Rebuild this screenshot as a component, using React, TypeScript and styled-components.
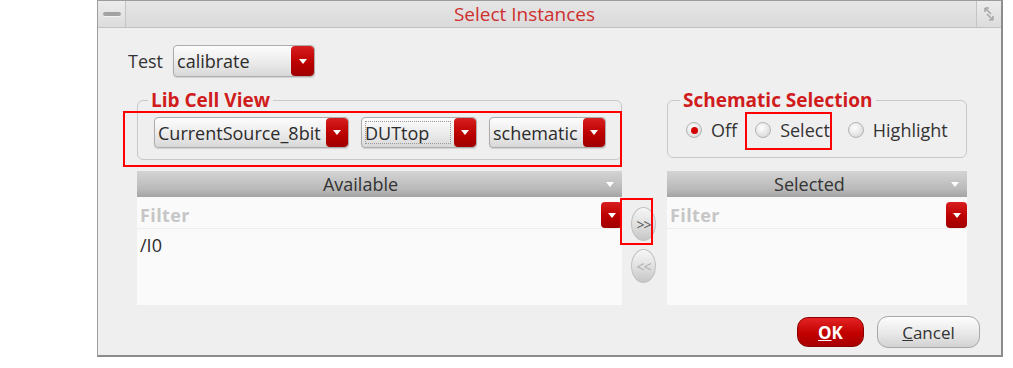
import React from 'react';
import styled, { createGlobalStyle } from 'styled-components';

const GlobalStyle = createGlobalStyle`
  html, body {
    margin: 0;
    padding: 0;
    background: #ffffff;
  }
  body {
    font-family: "Open Sans", "DejaVu Sans", Arial, sans-serif;
    font-size: 18px;
    color: #333333;
  }
`;

const Page = styled.div`
  width: 1013px;
  height: 368px;
  padding-left: 97px;
  box-sizing: border-box;
`;

const Window = styled.div`
  width: 906px;
  height: 357px;
  box-sizing: border-box;
  border: 1px solid #9c9c9c;
  border-right: 2px solid #8c8c8c;
  border-bottom: 2px solid #8c8c8c;
  background: #efefef;
  display: flex;
  flex-direction: column;
`;

const TitleBar = styled.div`
  height: 26px;
  display: flex;
  align-items: stretch;
  background: linear-gradient(#e6e6e6, #dadada);
  border-bottom: 1px solid #c2c2c2;
`;

const TitleButton = styled.div<{ $side: 'left' | 'right' }>`
  width: ${p => (p.$side === 'left' ? '27px' : '24px')};
  display: flex;
  align-items: center;
  justify-content: center;
  border-${p => (p.$side === 'left' ? 'right' : 'left')}: 1px solid #c4c4c4;
  background: linear-gradient(#ececec, #dcdcdc);
`;

const MinusBar = styled.div`
  width: 18px;
  height: 4px;
  border-radius: 2px;
  background: #a2a2a2;
  box-shadow: 0 1px 0 #f4f4f4;
`;

const Title = styled.div`
  flex: 1;
  text-align: center;
  padding-right: 53px;
  color: #cf2f2f;
  font-size: 19px;
  line-height: 26px;
`;

const Body = styled.div`
  flex: 1;
  display: flex;
  flex-direction: column;
  padding: 17px 20px 0 39px;
`;

const TestRow = styled.div`
  display: flex;
  align-items: center;
  gap: 10px;
  margin-left: -9px;
`;

const Label = styled.span`
  color: #333;
`;

const Combo = styled.div<{ $w: number; $h: number }>`
  width: ${p => p.$w}px;
  height: ${p => p.$h}px;
  box-sizing: border-box;
  display: flex;
  align-items: stretch;
  border: 1px solid #acacac;
  border-radius: 4px;
  background: linear-gradient(#fdfdfd, #e9e9e9 60%, #d8d8d8);
  box-shadow: 0 1px 1px rgba(0, 0, 0, 0.12);
  overflow: hidden;
`;

const ComboText = styled.div<{ $focus?: boolean }>`
  flex: 1;
  display: flex;
  align-items: center;
  padding-left: 3px;
  color: #2c2c2c;
  white-space: nowrap;
  ${p => (p.$focus ? 'outline: 1px dotted #9a9a9a; outline-offset: -4px;' : '')}
`;

const RedArrow = styled.div<{ $w?: number; $h?: number }>`
  width: ${p => p.$w ?? 22}px;
  ${p => (p.$h ? `height: ${p.$h}px;` : '')}
  flex: none;
  display: flex;
  align-items: center;
  justify-content: center;
  background: linear-gradient(#d81e1e, #bb0000 55%, #a00000);
  border-radius: 4px;
`;

const Tri = styled.div<{ $color?: string }>`
  width: 0;
  height: 0;
  border-left: 4px solid transparent;
  border-right: 4px solid transparent;
  border-top: 5px solid ${p => p.$color ?? '#ffffff'};
`;

const GroupRow = styled.div`
  display: flex;
  align-items: flex-start;
  gap: 45px;
  margin-top: 14px;
`;

const Group = styled.fieldset<{ $w: number }>`
  width: ${p => p.$w}px;
  box-sizing: border-box;
  margin: 0;
  padding: 0;
  min-width: 0;
  border: 1px solid #c8c8c8;
  border-radius: 6px;
`;

const Legend = styled.legend<{ $ml: number }>`
  margin-left: ${p => p.$ml}px;
  padding: 0 3px;
  color: #d01c1c;
  font-weight: 700;
  font-size: 19px;
  line-height: 18px;
`;

const ComboRow = styled.div`
  position: relative;
  display: flex;
  gap: 12px;
  padding: 8px 0 11px 16px;
`;

const RadioRow = styled.div`
  position: relative;
  display: flex;
  align-items: center;
  height: 24px;
  gap: 18px;
  padding: 9px 0 15px 18px;
`;

const RadioItem = styled.label`
  display: flex;
  align-items: center;
  gap: 9px;
  color: #333;
`;

const RadioCircle = styled.span<{ $on?: boolean }>`
  width: 16px;
  height: 16px;
  box-sizing: border-box;
  border-radius: 50%;
  border: 1px solid #b4b4b4;
  background: radial-gradient(circle at 40% 35%, #ffffff, #dedede 70%, #c8c8c8);
  display: flex;
  align-items: center;
  justify-content: center;
  &::after {
    content: '';
    width: 7px;
    height: 7px;
    border-radius: 50%;
    background: ${p => (p.$on ? '#d40000' : 'transparent')};
  }
`;

const ListsRow = styled.div`
  display: flex;
  margin-top: 11px;
`;

const ListPanel = styled.div<{ $w: number }>`
  width: ${p => p.$w}px;
  display: flex;
  flex-direction: column;
`;

const ListHeader = styled.div`
  height: 26px;
  display: grid;
  grid-template-columns: 24px 1fr 24px;
  align-items: center;
  justify-items: center;
  background: linear-gradient(#d4d4d4, #b9b9b9 70%, #a4a4a4);
  color: #333;
`;

const HeaderLabel = styled.span<{ $offset: number }>`
  margin-right: ${p => p.$offset}px;
`;

const ListBody = styled.div`
  height: 108px;
  background: #fafafa;
  display: flex;
  flex-direction: column;
`;

const FilterRow = styled.div`
  height: 32px;
  box-sizing: border-box;
  display: flex;
  align-items: flex-end;
  border-bottom: 1px solid #ededed;
`;

const FilterText = styled.div`
  flex: 1;
  line-height: 26px;
  padding-left: 3px;
  color: #c6c6c6;
  font-weight: 700;
  letter-spacing: 0.4px;
`;

const ListItem = styled.div`
  padding: 5px 3px 0;
  line-height: 22px;
  color: #2c2c2c;
`;

const MoveColumn = styled.div`
  position: relative;
  width: 45px;
  display: flex;
  flex-direction: column;
  align-items: center;
  gap: 8px;
  padding-top: 36px;
  padding-right: 2px;
  box-sizing: border-box;
`;

const RoundButton = styled.button<{ $disabled?: boolean }>`
  width: 25px;
  height: 34px;
  padding: 0;
  border-radius: 50%;
  border: 1px solid #c2c2c2;
  background: linear-gradient(#f6f6f6, #dcdcdc 60%, #c6c6c6);
  color: ${p => (p.$disabled ? '#b0b0b0' : '#5a5a5a')};
  font-family: "Open Sans", "DejaVu Sans", Arial, sans-serif;
  font-size: 14px;
  letter-spacing: -1px;
`;

const ButtonRow = styled.div`
  display: flex;
  justify-content: flex-end;
  align-items: center;
  gap: 13px;
  margin-top: 11px;
  margin-right: 1px;
`;

const DialogButton = styled.button<{ $primary?: boolean }>`
  width: ${p => (p.$primary ? 67 : 103)}px;
  height: ${p => (p.$primary ? 30 : 32)}px;
  border-radius: 11px;
  font-family: "Open Sans", "DejaVu Sans", Arial, sans-serif;
  font-size: 17px;
  padding: 0;
  ${p =>
    p.$primary
      ? `
    background: linear-gradient(#e42424, #c10000 55%, #a80000);
    border: 1px solid #8e0000;
    color: #ffffff;
    font-weight: 700;
  `
      : `
    background: linear-gradient(#fdfdfd, #e6e6e6 60%, #d2d2d2);
    border: 1px solid #a8a8a8;
    color: #333333;
  `}
`;

const Mark = styled.div<{ $l: number; $t: number; $w: number; $h: number }>`
  position: absolute;
  left: ${p => p.$l}px;
  top: ${p => p.$t}px;
  width: ${p => p.$w}px;
  height: ${p => p.$h}px;
  box-sizing: border-box;
  border: 2px solid #ff0000;
  pointer-events: none;
`;

const RestoreIcon = () => (
  <svg width="12" height="16" viewBox="0 0 12 16">
    <path d="M2 2 L6 2 M2 2 L2 6 M2 2 L8 8" stroke="#a8a8a8" strokeWidth="1.6" fill="none" />
    <path d="M10 14 L6 14 M10 14 L10 10 M10 14 L4 8" stroke="#a8a8a8" strokeWidth="1.6" fill="none" />
  </svg>
);

const App: React.FC = () => {
  return (
    <Page>
      <GlobalStyle />
      <Window>
        <TitleBar>
          <TitleButton $side="left">
            <MinusBar />
          </TitleButton>
          <Title>Select Instances</Title>
          <TitleButton $side="right">
            <RestoreIcon />
          </TitleButton>
        </TitleBar>
        <Body>
          <TestRow>
            <Label>Test</Label>
            <Combo $w={142} $h={32}>
              <ComboText>calibrate</ComboText>
              <RedArrow $w={23}>
                <Tri />
              </RedArrow>
            </Combo>
          </TestRow>

          <GroupRow>
            <Group $w={485}>
              <Legend $ml={10}>Lib Cell View</Legend>
              <ComboRow>
                <Combo $w={195} $h={31}>
                  <ComboText>CurrentSource_8bit</ComboText>
                  <RedArrow>
                    <Tri />
                  </RedArrow>
                </Combo>
                <Combo $w={116} $h={31}>
                  <ComboText $focus>DUTtop</ComboText>
                  <RedArrow>
                    <Tri />
                  </RedArrow>
                </Combo>
                <Combo $w={117} $h={31}>
                  <ComboText>schematic</ComboText>
                  <RedArrow>
                    <Tri />
                  </RedArrow>
                </Combo>
                <Mark $l={-15} $t={2} $w={499} $h={56} />
              </ComboRow>
            </Group>

            <Group $w={300}>
              <Legend $ml={12}>Schematic Selection</Legend>
              <RadioRow>
                <RadioItem>
                  <RadioCircle $on />
                  Off
                </RadioItem>
                <RadioItem>
                  <RadioCircle />
                  Select
                </RadioItem>
                <RadioItem>
                  <RadioCircle />
                  Highlight
                </RadioItem>
                <Mark $l={77} $t={3} $w={87} $h={38} />
              </RadioRow>
            </Group>
          </GroupRow>

          <ListsRow>
            <ListPanel $w={485}>
              <ListHeader>
                <span />
                <HeaderLabel $offset={38}>Available</HeaderLabel>
                <Tri />
              </ListHeader>
              <ListBody>
                <FilterRow>
                  <FilterText>Filter</FilterText>
                  <RedArrow $w={21} $h={26}>
                    <Tri />
                  </RedArrow>
                </FilterRow>
                <ListItem>/I0</ListItem>
              </ListBody>
            </ListPanel>

            <MoveColumn>
              <RoundButton>&gt;&gt;</RoundButton>
              <RoundButton $disabled>&lt;&lt;</RoundButton>
              <Mark $l={-2} $t={27} $w={33} $h={47} />
            </MoveColumn>

            <ListPanel $w={300}>
              <ListHeader>
                <span />
                <HeaderLabel $offset={15}>Selected</HeaderLabel>
                <Tri />
              </ListHeader>
              <ListBody>
                <FilterRow>
                  <FilterText>Filter</FilterText>
                  <RedArrow $w={21} $h={26}>
                    <Tri />
                  </RedArrow>
                </FilterRow>
              </ListBody>
            </ListPanel>
          </ListsRow>

          <ButtonRow>
            <DialogButton $primary>
              <u>O</u>K
            </DialogButton>
            <DialogButton>
              <u>C</u>ancel
            </DialogButton>
          </ButtonRow>
        </Body>
      </Window>
    </Page>
  );
};

export default App;
